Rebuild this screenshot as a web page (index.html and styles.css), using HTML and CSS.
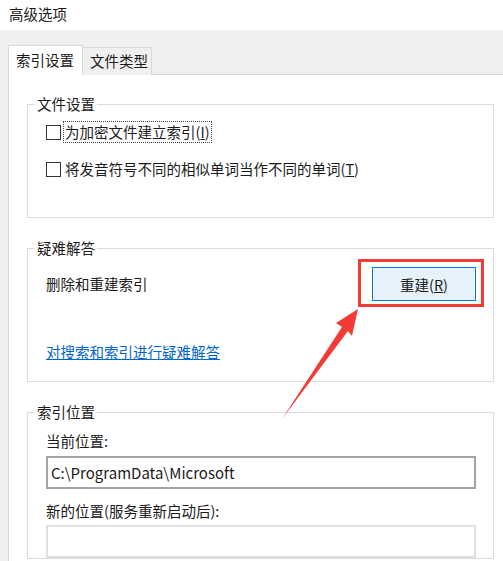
FILE: index.html
```html
<!DOCTYPE html>
<html lang="zh-CN">
<head>
<meta charset="utf-8">
<title>高级选项</title>
<link rel="stylesheet" href="styles.css">
</head>
<body>
<div class="titlebar">高级选项</div>
<div class="dialog">
  <div class="tabs">
    <div class="tab active">索引设置</div>
    <div class="tab">文件类型</div>
  </div>
  <div class="panel">
    <fieldset class="group">
      <legend>文件设置</legend>
      <div class="body body-files">
        <div class="check">
          <span class="box"></span>
          <span class="label focus">为加密文件建立索引(<u>I</u>)</span>
        </div>
        <div class="check second">
          <span class="box"></span>
          <span class="label">将发音符号不同的相似单词当作不同的单词(<u>T</u>)</span>
        </div>
      </div>
    </fieldset>
    <fieldset class="group spaced">
      <legend>疑难解答</legend>
      <div class="body body-trouble">
        <div class="rebuild-row">
          <span class="rebuild-text">删除和重建索引</span>
          <span class="highlight"><button class="btn" type="button">重建(<u>R</u>)</button></span>
        </div>
        <a class="link" href="#">对搜索和索引进行疑难解答</a>
      </div>
    </fieldset>
    <fieldset class="group spaced">
      <legend>索引位置</legend>
      <div class="body body-location">
        <div class="field-label">当前位置:</div>
        <div class="field current">C:\ProgramData\Microsoft</div>
        <div class="field-label second-label">新的位置(服务重新启动后):</div>
        <div class="field empty"></div>
      </div>
    </fieldset>
  </div>
</div>
<svg class="arrow" width="503" height="561" viewBox="0 0 503 561">
  <polygon points="358,309 336,323 342,327 282,419 348,331 352,336" fill="#f23b37"/>
</svg>
</body>
</html>
```

FILE: styles.css
```css
html, body {
  margin: 0;
  padding: 0;
}
body {
  width: 503px;
  height: 561px;
  overflow: hidden;
  position: relative;
  background: #f0f0f0;
  font-family: "Noto Sans CJK SC", "Noto Sans", sans-serif;
  font-size: 14.5px;
  color: #1b1b1b;
}
.titlebar {
  height: 30px;
  line-height: 28px;
  padding-left: 9px;
  background: #ffffff;
}
.dialog {
  padding: 15px 0 0 8px;
}
.tabs {
  display: flex;
  align-items: flex-end;
  height: 30px;
  margin-bottom: -1px;
}
.tab {
  box-sizing: border-box;
  height: 28px;
  width: 69px;
  padding-left: 7px;
  line-height: 26px;
  border: 1px solid #d9d9d9;
  border-left: none;
  border-bottom: none;
  background: #f0f0f0;
}
.tab.active {
  position: relative;
  z-index: 1;
  height: 30px;
  width: 75px;
  padding-left: 7px;
  line-height: 28px;
  border-left: 1px solid #d9d9d9;
  background: #ffffff;
}
.panel {
  box-sizing: border-box;
  height: 487px;
  overflow: hidden;
  background: #ffffff;
  border-top: 1px solid #d9d9d9;
  border-left: 1px solid #d9d9d9;
  padding: 21px 9px 0 18px;
}
.group {
  margin: 0;
  padding: 0;
  min-width: 0;
  border: 1px solid #dcdcdc;
}
.group.spaced {
  margin-top: 22px;
}
.group legend {
  margin-left: 7px;
  padding: 0 2px;
  line-height: 16px;
}
.body {
  padding: 0 9px 0 18px;
}
.body-files {
  padding-top: 9px;
  padding-bottom: 37px;
}
.check {
  display: flex;
  align-items: center;
  height: 22px;
}
.check.second {
  margin-top: 15px;
}
.box {
  box-sizing: border-box;
  width: 15px;
  height: 15px;
  border: 1px solid #333333;
  background: #ffffff;
  margin-right: 2px;
}
.label {
  line-height: 20px;
  padding: 0 1px;
  border: 1px solid transparent;
}
.label.focus {
  border: 1px dotted #444444;
}
.body-trouble {
  padding-top: 3px;
  padding-bottom: 19px;
}
.rebuild-row {
  display: flex;
  align-items: center;
  justify-content: space-between;
}
.highlight {
  display: block;
  border: 3px solid #f23b37;
  padding: 5px 5px 3px 11px;
}
.btn {
  display: block;
  box-sizing: border-box;
  width: 104px;
  height: 34px;
  border: 1px solid #0078d7;
  background: #e5f1fb;
  font-family: inherit;
  font-size: 14.5px;
  color: #1b1b1b;
  padding: 0;
}
.link {
  display: block;
  width: max-content;
  margin-top: 35px;
  line-height: 20px;
  color: #0066cc;
  text-decoration: underline;
}
.body-location {
  padding-top: 11px;
}
.field-label {
  line-height: 20px;
}
.second-label {
  margin-top: 12px;
}
.field {
  box-sizing: border-box;
  width: 430px;
  height: 33px;
  margin-top: 5px;
  padding-left: 3px;
  line-height: 29px;
  font-size: 15px;
  border: 2px solid #a3a3a3;
  background: #ffffff;
}
.field.empty {
  margin-top: 4px;
  border-color: #e0e0e0;
}
.arrow {
  position: absolute;
  left: 0;
  top: 0;
  pointer-events: none;
}
```
